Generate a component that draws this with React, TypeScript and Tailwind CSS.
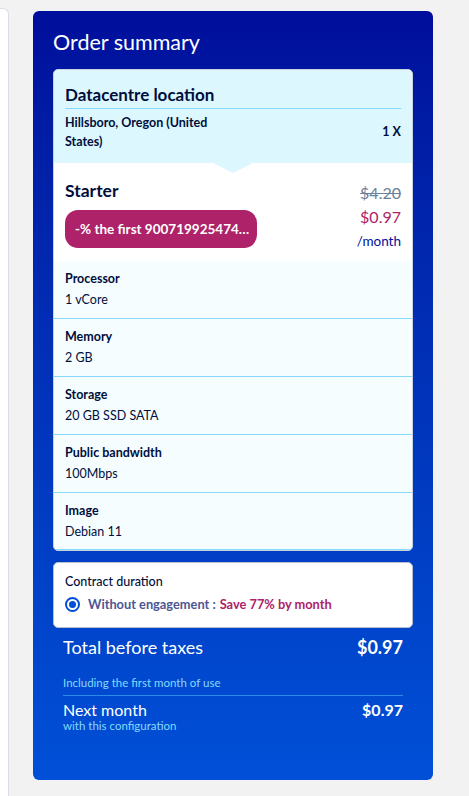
import React from "react";

const specs = [
  { label: "Processor", value: "1 vCore" },
  { label: "Memory", value: "2 GB" },
  { label: "Storage", value: "20 GB SSD SATA" },
  { label: "Public bandwidth", value: "100Mbps" },
  { label: "Image", value: "Debian 11" },
];

export default function App() {
  return (
    <div
      className="min-h-[796px] w-[469px] bg-[#f2f2f2] flex items-start overflow-hidden"
      style={{ fontFamily: "Lato, 'Open Sans', sans-serif" }}
    >
      <div className="w-[9px] h-[788px] mt-[8px] bg-white border-r border-t border-[#dcdbe8] rounded-tr-[6px] shrink-0" />
      <div className="ml-[24px] mt-[11px] w-[400px] h-[769px] rounded-[6px] bg-gradient-to-b from-[#000e9c] to-[#0050d7] px-[20px] shrink-0">
        <div className="pt-[17px] h-[58px] text-white text-[21.5px] leading-[28px]">Order summary</div>

        <div className="rounded-[5px] overflow-hidden border border-[#c9d3e0] bg-[#f5fdff]">
          <div className="relative bg-[#dcf7fe] px-[11px] pt-[13px] h-[93px]">
            <div className="text-[#000e3c] font-bold text-[17px] leading-[24px] pb-[1px] border-b border-[#85d9fd]">
              Datacentre location
            </div>
            <div className="flex items-center justify-between pt-[4px]">
              <div className="w-[160px] text-[#000e3c] font-bold text-[12.5px] leading-[19px]">
                Hillsboro, Oregon (United States)
              </div>
              <div className="text-[#000e3c] font-bold text-[12.5px]">1 X</div>
            </div>
          </div>
          <div className="relative bg-white px-[11px] pt-[17px] pb-[10px] flex justify-between">
            <div className="absolute left-[159px] top-0 w-0 h-0 border-l-[20px] border-r-[20px] border-t-[10px] border-l-transparent border-r-transparent border-t-[#dcf7fe]" />
            <div>
              <div className="text-[#000e3c] font-bold text-[17.5px] leading-[22px]">Starter</div>
              <div className="mt-[8px] w-[192px] h-[38px] rounded-[13px] bg-[#ad2268] text-white font-bold text-[13.5px] flex items-center pl-[10px] whitespace-nowrap">
                -% the first 900719925474…
              </div>
            </div>
            <div className="flex flex-col items-end pt-[2px]">
              <div className="text-[#6b7f99] text-[16px] leading-[22px] line-through">$4.20</div>
              <div className="text-[#ad2268] text-[16px] leading-[22px] mt-[2px]">$0.97</div>
              <div className="text-[#000e9c] text-[13.5px] leading-[20px] mt-[3px]">/month</div>
            </div>
          </div>
          {specs.map((s) => (
            <div key={s.label} className="h-[58px] px-[11px] pt-[9px] border-b border-[#85d9fd] last:h-[57px]">
              <div className="text-[#000e3c] font-bold text-[12.5px] leading-[18px]">{s.label}</div>
              <div className="text-[#000e3c] text-[12.5px] leading-[18px] mt-[3px]">{s.value}</div>
            </div>
          ))}
        </div>

        <div className="mt-[11px] h-[66px] rounded-[5px] bg-white border border-[#b7bfcc] px-[11px] pt-[10px]">
          <div className="text-[#000e3c] text-[12.5px] leading-[18px] font-medium">Contract duration</div>
          <div className="flex items-center mt-[4px]">
            <div className="w-[15px] h-[15px] rounded-full border-[2px] border-[#0050d7] flex items-center justify-center">
              <div className="w-[7px] h-[7px] rounded-full bg-[#0050d7]" />
            </div>
            <span className="ml-[8px] text-[#4d5693] font-bold text-[12.8px]">Without engagement :</span>
            <span className="ml-[4px] text-[#ad2268] font-bold text-[12.8px]">Save 77% by month</span>
          </div>
        </div>

        <div className="px-[10px]">
          <div className="flex justify-between items-center mt-[7px] h-[24px]">
            <span className="text-white text-[18px]">Total before taxes</span>
            <span className="text-white font-bold text-[18px]">$0.97</span>
          </div>
          <div className="text-[#85d9fd] text-[11.5px] mt-[16px] leading-[16px] pb-[4px] border-b border-[#2b8be8]">
            Including the first month of use
          </div>
          <div className="flex justify-between mt-[4px]">
            <div>
              <div className="text-white text-[16px] leading-[20px]">Next month</div>
              <div className="text-[#85d9fd] text-[11.5px] leading-[12px]">with this configuration</div>
            </div>
            <div className="text-white font-bold text-[16px] leading-[20px]">$0.97</div>
          </div>
        </div>
      </div>
    </div>
  );
}
